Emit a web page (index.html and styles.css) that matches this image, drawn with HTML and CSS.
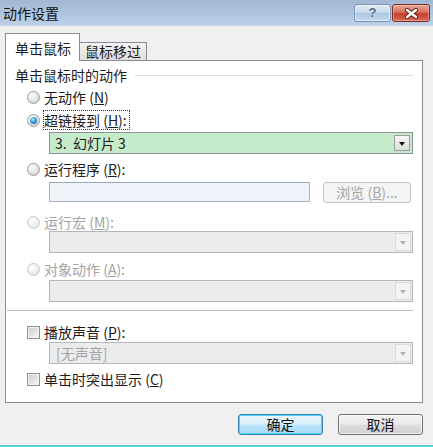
FILE: index.html
```html
<!DOCTYPE html>
<html lang="zh">
<head>
<meta charset="utf-8">
<title>动作设置</title>
<link rel="stylesheet" href="styles.css">
</head>
<body>
<div class="dialog">
  <div class="titlebar">
    <div class="title">动作设置</div>
    <div class="tbtns">
      <div class="tbtn help"><span>?</span></div>
      <div class="tbtn close">
        <svg width="15" height="11" viewBox="0 0 15 11"><path d="M3 2 L12 9 M12 2 L3 9" stroke="#5b1d14" stroke-width="4.2" stroke-linecap="round"/><path d="M3 2 L12 9 M12 2 L3 9" stroke="#ffffff" stroke-width="2.4" stroke-linecap="round"/></svg>
      </div>
    </div>
  </div>

  <div class="tabs">
    <div class="tab active">单击鼠标</div>
    <div class="tab">鼠标移过</div>
  </div>

  <div class="panel">
    <div class="ghead"><span>单击鼠标时的动作</span></div>

    <div class="opt r1"><span class="radio"></span><span class="lbl">无动作 (<u>N</u>)</span></div>
    <div class="opt r2"><span class="radio checked"></span><span class="lbl focus">超链接到 (<u>H</u>):</span></div>
    <div class="dd dd1 active-dd"><span class="ddtext">3.&nbsp; 幻灯片 3</span><span class="ddbtn"><i></i></span></div>

    <div class="opt r3"><span class="radio"></span><span class="lbl">运行程序 (<u>R</u>):</span></div>
    <div class="tbrow">
      <div class="tbox"></div>
      <div class="browse">浏览 (<u>B</u>)...</div>
    </div>

    <div class="opt r4 dis"><span class="radio"></span><span class="lbl">运行宏 (<u>M</u>):</span></div>
    <div class="dd dd2"><span class="ddtext"></span><span class="ddbtn"><i></i></span></div>

    <div class="opt r5 dis"><span class="radio"></span><span class="lbl">对象动作 (<u>A</u>):</span></div>
    <div class="dd dd3"><span class="ddtext"></span><span class="ddbtn"><i></i></span></div>

    <div class="sep"></div>

    <div class="opt c1"><span class="check"></span><span class="lbl">播放声音 (<u>P</u>):</span></div>
    <div class="dd dd4"><span class="ddtext grey">[无声音]</span><span class="ddbtn"><i></i></span></div>

    <div class="opt c2"><span class="check"></span><span class="lbl">单击时突出显示 (<u>C</u>)</span></div>
  </div>

  <div class="actions">
    <div class="btn default">确定</div>
    <div class="btn">取消</div>
  </div>
</div>
</body>
</html>
```

FILE: styles.css
```css
* { box-sizing: border-box; }

body {
  margin: 0;
  width: 433px;
  height: 447px;
  overflow: hidden;
  background: #f0f0f0;
  font-family: "Noto Sans CJK SC", "Liberation Sans", sans-serif;
  font-size: 14px;
  color: #1c1c1c;
}

.dialog {
  height: 447px;
  border-bottom: 2px solid #5fcbdb;
  display: flex;
  flex-direction: column;
}

/* title bar */
.titlebar {
  height: 26px;
  flex: none;
  background: linear-gradient(#a1b7d3, #bcd0e8);
  border-bottom: 1px solid #c9d7e6;
  display: flex;
  align-items: flex-start;
}
.title {
  padding-left: 3px;
  line-height: 26px;
  color: #111;
}
.tbtns {
  margin-left: auto;
  display: flex;
  gap: 1px;
  padding-top: 4px;
  padding-right: 3px;
}
.tbtn {
  height: 18px;
  border-radius: 3px;
  display: flex;
  align-items: center;
  justify-content: center;
}
.help {
  width: 37px;
  border: 1px solid #7892b3;
  background: linear-gradient(#e3ecf6, #c6d7ea 48%, #aec4de 52%, #c7daef);
  box-shadow: inset 0 0 0 1px rgba(255,255,255,0.5);
}
.help span {
  font-family: "Liberation Sans", sans-serif;
  font-weight: bold;
  font-size: 13px;
  line-height: 14px;
  color: #4b6688;
  text-shadow: 0 0 2px #fff;
}
.close {
  width: 38px;
  border: 1px solid #7c2b22;
  background: linear-gradient(#e9a999, #d6705c 45%, #c6412c 55%, #d86c55);
  box-shadow: inset 0 0 0 1px rgba(255,220,210,0.4);
}

/* tabs */
.tabs {
  flex: none;
  height: 28px;
  margin-top: 6px;
  padding-left: 5px;
  display: flex;
  align-items: flex-end;
  position: relative;
  z-index: 1;
}
.tab {
  height: 18px;
  width: 67px;
  border: 1px solid #898c95;
  border-left: none;
  border-bottom: none;
  background: linear-gradient(#f3f3f3, #dedede);
  padding-left: 5px;
  line-height: 17px;
  white-space: nowrap;
}
.tab.active {
  width: 75px;
  height: 28px;
  border-left: 1px solid #898c95;
  background: #fff;
  padding-left: 9px;
  padding-top: 5px;
  line-height: 18px;
  margin-bottom: -1px;
}

/* panel */
.panel {
  flex: none;
  margin-left: 5px;
  width: 418px;
  height: 343px;
  border: 1px solid #898c95;
  background: #fff;
  padding: 0 9px;
  display: flex;
  flex-direction: column;
}

.ghead {
  margin-top: 6px;
  height: 16px;
  display: flex;
  align-items: center;
  line-height: 16px;
}
.ghead::after {
  content: "";
  flex: 1;
  margin-left: 8px;
  border-top: 1px solid #d5dfe5;
}

.opt {
  height: 18px;
  display: flex;
  align-items: center;
  padding-left: 12px;
  line-height: 18px;
  white-space: nowrap;
}
.opt .lbl { margin-left: 4px; }
.opt u { text-decoration: underline; text-underline-offset: 1px; }
.lbl.focus {
  outline: 1px dotted #333;
  outline-offset: 0;
  padding-right: 2px;
}
.dis { color: #a3a3a3; }

.r1 { margin-top: 5px; }
.r2 { margin-top: 5px; }
.dd1 { margin-top: 3px; }
.r3 { margin-top: 6px; }
.tbrow { margin-top: 4px; }
.r4 { margin-top: 10px; }
.dd2 { margin-top: 0; }
.r5 { margin-top: 7px; }
.dd3 { margin-top: 2px; }
.sep { margin-top: 8px; }
.c1 { margin-top: 12px; }
.dd4 { margin-top: 1px; }
.c2 { margin-top: 6px; }

/* radio */
.radio {
  flex: none;
  width: 13px;
  height: 13px;
  border-radius: 50%;
  border: 1px solid #9a9a9a;
  background: radial-gradient(circle at 35% 30%, #ffffff 0%, #e8e8e8 45%, #c6c6c6 100%);
  position: relative;
}
.radio.checked::after {
  content: "";
  position: absolute;
  left: 2px;
  top: 2px;
  width: 7px;
  height: 7px;
  border-radius: 50%;
  background: radial-gradient(circle at 40% 35%, #b6ecff 0%, #3a9ad6 45%, #174b85 100%);
}
.dis .radio {
  border-color: #c9c9c9;
  background: radial-gradient(circle at 35% 30%, #ffffff 0%, #f0f0f0 50%, #dcdcdc 100%);
}

/* checkbox */
.check {
  flex: none;
  width: 13px;
  height: 13px;
  border: 1px solid #8e8f8f;
  background: linear-gradient(135deg, #cbcbcb, #eeeeee 80%, #f6f6f6);
  box-shadow: inset 0 0 0 1px #f4f4f4;
}

/* dropdowns */
.dd {
  margin-left: 34px;
  height: 22px;
  border: 1px solid #b1b6bb;
  background: #ececec;
  display: flex;
  align-items: center;
}
.ddtext {
  flex: 1;
  padding-left: 5px;
  line-height: 18px;
  white-space: nowrap;
}
.ddtext.grey { color: #a3a3a3; padding-left: 6px; }
.ddbtn {
  flex: none;
  width: 16px;
  height: 18px;
  margin-right: 1px;
  border: 1px solid #dadada;
  background: #f3f3f3;
  display: flex;
  align-items: center;
  justify-content: center;
}
.ddbtn i {
  width: 0;
  height: 0;
  border-left: 3.5px solid transparent;
  border-right: 3.5px solid transparent;
  border-top: 4px solid #b0b0b0;
  margin-top: 2px;
}
.active-dd {
  border-color: #8f9498;
  background: #c5ebcb;
}
.active-dd .ddbtn {
  width: 16px;
  height: 16px;
  margin-right: 2px;
  border-color: #9c9c9c;
  background: linear-gradient(#f7f7f7, #dcdcdc);
}
.active-dd .ddbtn i { border-top-color: #111; margin-top: 1px; }

/* textbox row */
.tbrow {
  margin-left: 34px;
  display: flex;
  align-items: flex-start;
  height: 21px;
}
.tbox {
  width: 261px;
  height: 20px;
  border: 1px solid #abb5c1;
  border-top-color: #9aa6b4;
  background: #eef3fa;
}
.browse {
  margin-left: 13px;
  width: 88px;
  height: 21px;
  border: 1px solid #c3c3c3;
  border-radius: 3px;
  background: #f4f4f4;
  color: #a6a6a6;
  text-align: center;
  line-height: 19px;
  white-space: nowrap;
}

.sep {
  margin-left: -8px;
  border-top: 1px solid #bcbcbc;
  height: 1px;
}

/* bottom buttons */
.actions {
  flex: none;
  margin-top: 11px;
  padding-right: 10px;
  display: flex;
  justify-content: flex-end;
  gap: 15px;
}
.btn {
  width: 85px;
  height: 21px;
  border: 1px solid #707070;
  border-radius: 3px;
  background: linear-gradient(#f2f2f2, #ebebeb 48%, #dddddd 52%, #cfcfcf);
  box-shadow: inset 0 0 0 1px rgba(255,255,255,0.7);
  text-align: center;
  line-height: 19px;
  color: #111;
}
.btn.default {
  border-color: #3c7fb1;
  background: linear-gradient(#eaf6fd, #d9f0fc 48%, #bee6fd 52%, #a7d9f5);
  box-shadow: inset 0 0 0 1px #48d9f9;
}
```
